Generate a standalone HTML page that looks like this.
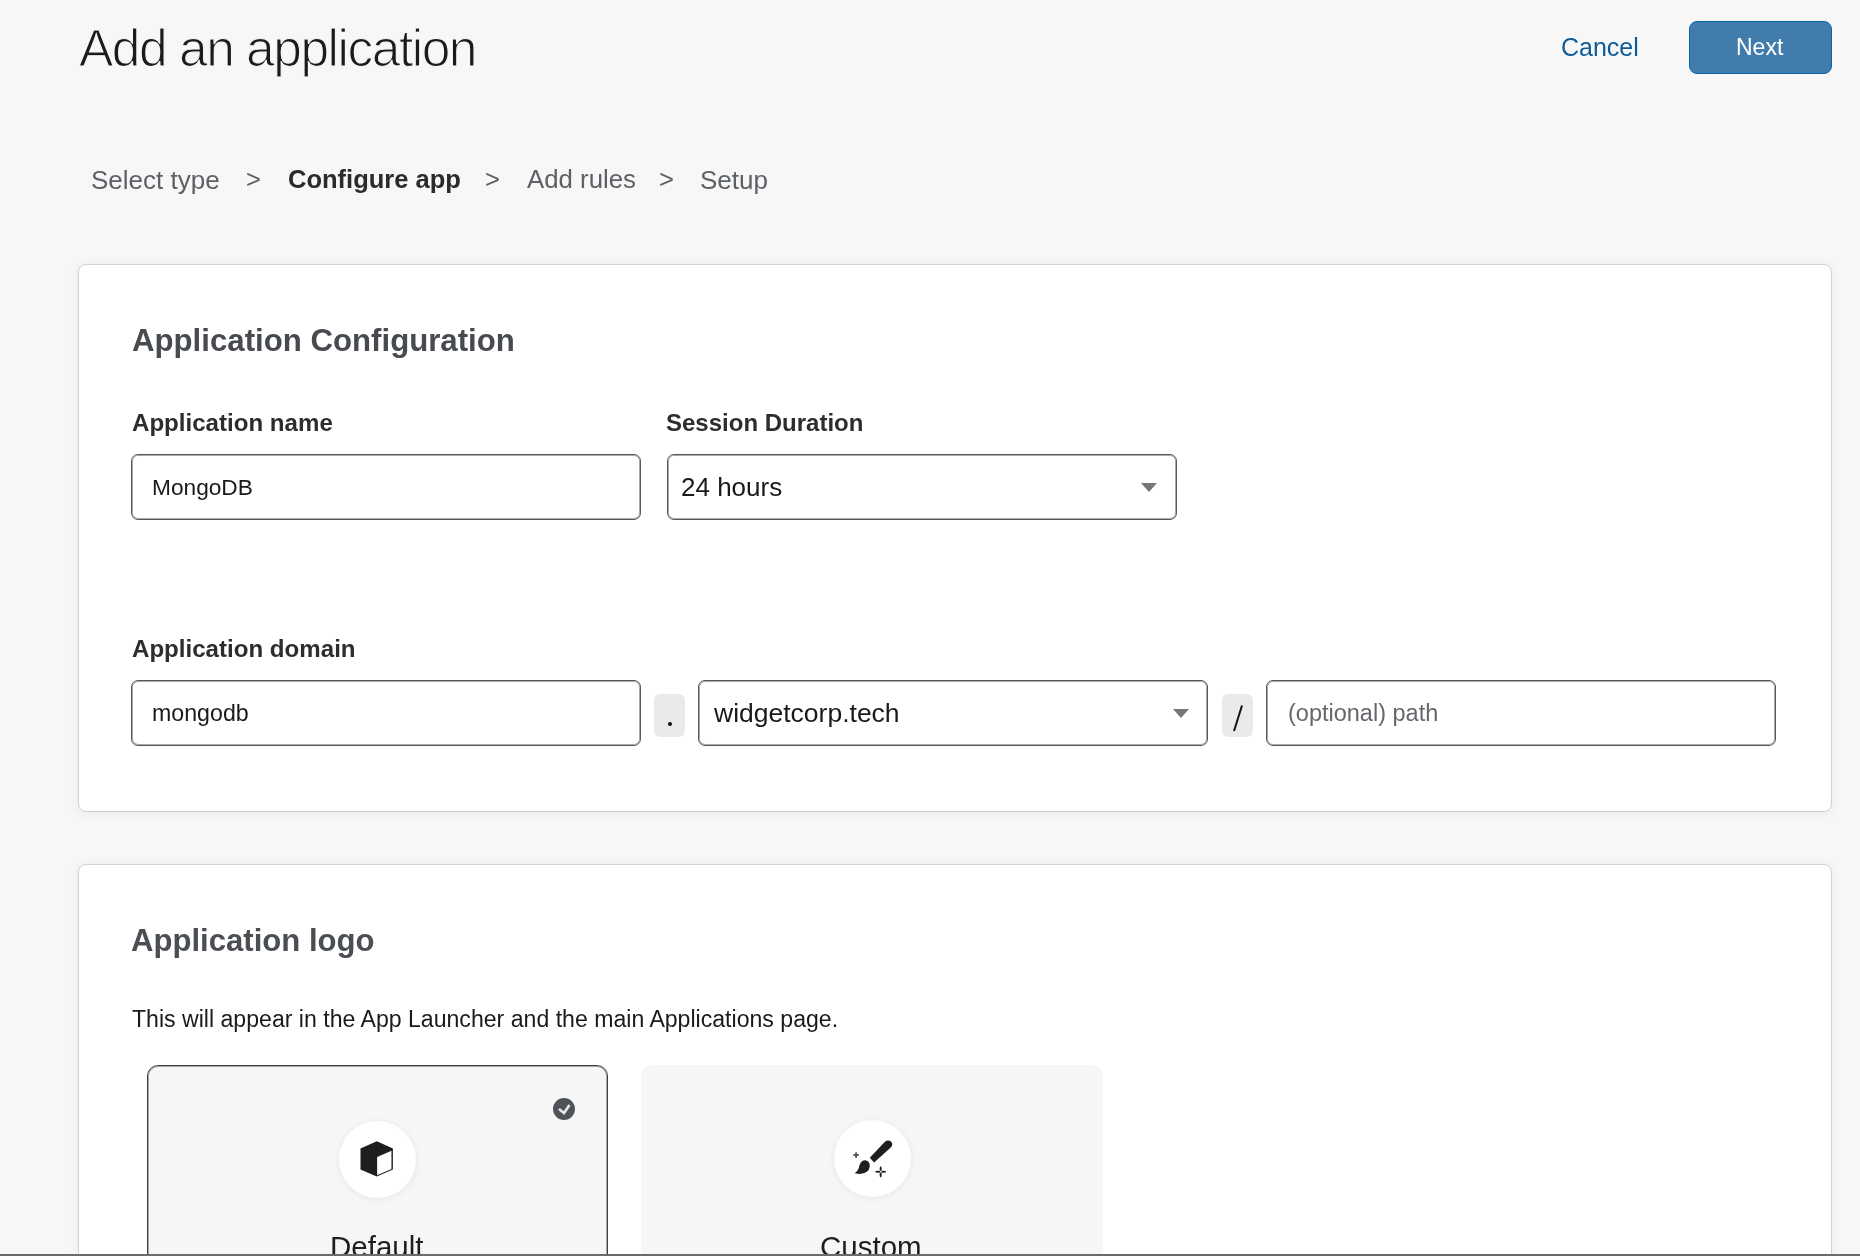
<!DOCTYPE html>
<html>
<head>
<meta charset="utf-8">
<style>
html,body{margin:0;padding:0;}
body{width:1860px;height:1256px;overflow:hidden;position:relative;background:#f7f7f7;font-family:"Liberation Sans",sans-serif;}
.a{position:absolute;white-space:nowrap;line-height:1;will-change:transform;}
.b{font-weight:bold;}
.card{position:absolute;left:78px;width:1754px;background:#fff;border:1px solid #cfd1d3;border-radius:8px;box-shadow:0 1px 12px rgba(0,0,0,0.055);box-sizing:border-box;}
.inp{position:absolute;box-sizing:border-box;border:1px solid #52585e;box-shadow:inset 0 0 0 1px rgba(82,88,94,0.5);border-radius:7px;background:#fff;height:66px;}
.caret{position:absolute;width:0;height:0;border-left:8.5px solid transparent;border-right:8.5px solid transparent;border-top:9px solid #74777b;}
.sep{position:absolute;background:#e9eaea;border-radius:6px;width:31px;height:43px;top:694px;}
.tile{position:absolute;box-sizing:border-box;border-radius:11px;background:#f6f6f6;top:1065px;height:240px;}
.circ{position:absolute;width:77px;height:77px;border-radius:50%;background:#fff;box-shadow:0 1px 7px rgba(0,0,0,0.07);}
</style>
</head>
<body>
<!-- header -->
<div class="a" style="left:78.5px;top:23px;font-size:51.5px;color:#1b1b1b;letter-spacing:-1.49px;-webkit-text-stroke:1.2px #f7f7f7;">Add an application</div>
<div class="a" style="left:1561px;top:35px;font-size:25px;color:#0f5b98;">Cancel</div>
<div style="position:absolute;left:1689px;top:21px;width:143px;height:53px;box-sizing:border-box;background:#427cad;border:1.5px solid #0b64a7;border-radius:8px;"></div>
<div class="a" style="left:1736px;top:35.5px;font-size:23px;color:#fff;">Next</div>

<!-- breadcrumb -->
<div class="a" style="left:90.5px;top:167px;font-size:26px;color:#5d6166;">Select type</div>
<div class="a" style="left:245.5px;top:167px;font-size:25.5px;color:#5d6166;">&gt;</div>
<div class="a b" style="left:287.5px;top:167px;font-size:25.5px;color:#2a2b2d;">Configure app</div>
<div class="a" style="left:485px;top:167px;font-size:25.5px;color:#5d6166;">&gt;</div>
<div class="a" style="left:527px;top:167px;font-size:25.8px;color:#5d6166;">Add rules</div>
<div class="a" style="left:659px;top:167px;font-size:25.5px;color:#5d6166;">&gt;</div>
<div class="a" style="left:700px;top:167px;font-size:26px;color:#5d6166;">Setup</div>

<!-- card 1 -->
<div class="card" style="top:264px;height:548px;"></div>
<div class="a b" style="left:131.5px;top:325px;font-size:31.2px;color:#474b50;">Application Configuration</div>
<div class="a b" style="left:131.5px;top:411px;font-size:24.1px;color:#2b2d2f;">Application name</div>
<div class="a b" style="left:666px;top:411px;font-size:24px;color:#2b2d2f;">Session Duration</div>
<div class="inp" style="left:131px;top:454px;width:510px;"></div>
<div class="a" style="left:151.5px;top:475.5px;font-size:22.7px;color:#1a1a1a;">MongoDB</div>
<div class="inp" style="left:667px;top:454px;width:510px;"></div>
<div class="a" style="left:681px;top:474px;font-size:26px;color:#1a1a1a;">24 hours</div>
<div class="caret" style="left:1141px;top:483px;"></div>

<div class="a b" style="left:131.5px;top:637px;font-size:24.1px;color:#2b2d2f;">Application domain</div>
<div class="inp" style="left:131px;top:680px;width:510px;"></div>
<div class="a" style="left:151.5px;top:702px;font-size:23.2px;color:#1a1a1a;">mongodb</div>
<div class="sep" style="left:654px;"></div>
<div style="position:absolute;left:668px;top:722px;width:4px;height:4px;border-radius:50%;background:#111;"></div>
<div class="inp" style="left:698px;top:680px;width:510px;"></div>
<div class="a" style="left:714px;top:700px;font-size:26.5px;color:#1a1a1a;">widgetcorp.tech</div>
<div class="caret" style="left:1173px;top:709px;"></div>
<div class="sep" style="left:1222px;"></div>
<svg style="position:absolute;left:1222px;top:694px;" width="31" height="43"><line x1="20" y1="11.5" x2="12" y2="37" stroke="#111" stroke-width="2"/></svg>
<div class="inp" style="left:1266px;top:680px;width:510px;"></div>
<div class="a" style="left:1287.5px;top:702px;font-size:23.5px;color:#64676b;">(optional) path</div>

<!-- card 2 -->
<div class="card" style="top:864px;height:500px;"></div>
<div class="a b" style="left:131px;top:925px;font-size:31.1px;color:#4b4f54;">Application logo</div>
<div class="a" style="left:132px;top:1008px;font-size:23.1px;color:#1a1a1a;">This will appear in the App Launcher and the main Applications page.</div>

<div class="tile" style="left:147px;width:461px;border:1px solid #3e4246;box-shadow:inset 0 0 0 1px rgba(62,66,70,0.45);"></div>
<div class="tile" style="left:641px;width:462px;"></div>
<div style="position:absolute;left:553px;top:1098px;width:22px;height:22px;border-radius:50%;background:#4f5358;"></div>
<svg style="position:absolute;left:553px;top:1098px;" width="22" height="22"><polyline points="6,11 11,15 16.5,7" fill="none" stroke="#e8e8e8" stroke-width="2.6"/></svg>

<div class="circ" style="left:339px;top:1121px;"></div>
<div class="circ" style="left:834px;top:1120px;"></div>
<!-- cube -->
<svg style="position:absolute;left:330px;top:1110px;" width="100" height="100" viewBox="0 0 1256 1256">
<polygon points="588,392 790,482 790,748 588,835 383,748 383,482" fill="#1d1e20"/>
<polygon points="592,590 772,512 772,740 592,818" fill="#fff"/>
</svg>
<!-- brush -->
<svg style="position:absolute;left:822px;top:1108px;" width="100" height="100" viewBox="0 0 1256 1256">
<path d="M600,625 L790,425 Q830,390 870,425 Q900,460 860,500 L655,685 Z" fill="#1d1e20"/>
<path d="M410,820 Q460,790 470,720 Q490,655 545,655 Q605,665 600,735 Q590,820 470,830 Z" fill="#1d1e20"/>
<g fill="#1d1e20"><ellipse cx="409" cy="591" rx="20" ry="9"/><ellipse cx="447" cy="591" rx="20" ry="9"/><ellipse cx="428" cy="572" rx="9" ry="20"/><ellipse cx="428" cy="610" rx="9" ry="20"/>
<ellipse cx="703" cy="800" rx="35" ry="13"/><ellipse cx="771" cy="800" rx="35" ry="13"/><ellipse cx="737" cy="766" rx="13" ry="35"/><ellipse cx="737" cy="834" rx="13" ry="35"/></g>
<circle cx="737" cy="800" r="11" fill="#fff"/>
</svg>
<div class="a" style="left:330px;top:1232px;font-size:29.5px;color:#1d1e20;">Default</div>
<div class="a" style="left:820px;top:1232px;font-size:29.5px;color:#1d1e20;">Custom</div>

<div style="position:absolute;left:0;top:1254px;width:1860px;height:2px;background:#6b6b6b;"></div>
</body>
</html>
